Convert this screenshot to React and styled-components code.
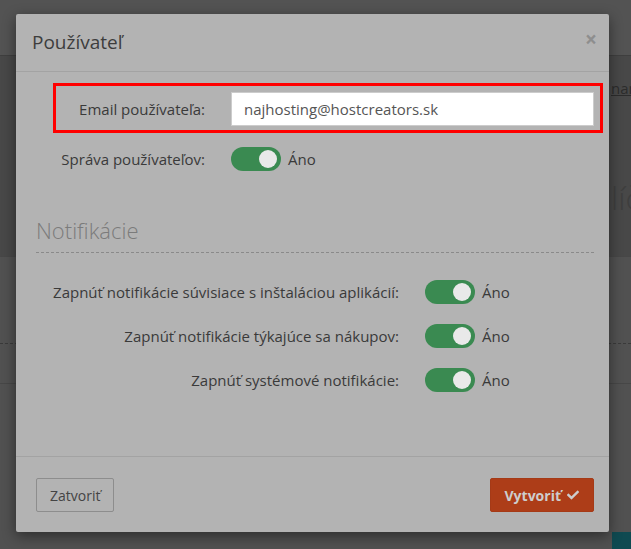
import React from "react";
import styled, { createGlobalStyle } from "styled-components";
import { FaCheck } from "react-icons/fa";

const Global = createGlobalStyle`
  html, body { margin: 0; padding: 0; }
  body {
    width: 631px; height: 549px; overflow: hidden;
    font-family: "Open Sans", "DejaVu Sans", sans-serif;
    background: #4f4f4f;
  }
  * { box-sizing: border-box; }
`;

const Page = styled.div`
  position: relative;
  width: 631px;
  height: 549px;
  overflow: hidden;
  display: flex;
  flex-direction: column;
`;

const TopBar = styled.div`
  height: 56px;
  background: #535353;
  border-bottom: 1px solid #3f3f3f;
`;

const UpperBand = styled.div`
  height: 200px;
  background: #484848;
  display: flex;
  flex-direction: column;
  padding-left: 611px;
  white-space: nowrap;
`;

const PeekLink = styled.span`
  margin-top: 22px;
  font-size: 15px;
  color: #2c2c2c;
  text-decoration: underline;
`;

const PeekTitle = styled.span`
  margin-top: 78px;
  font-size: 32px;
  color: #3e3e3e;
  font-weight: 300;
`;

const LowerBand = styled.div`
  flex: 1;
  background: #515151;
  border-top: 1px solid #474747;
  display: flex;
  flex-direction: column;
`;

const PeekDashed = styled.div`
  margin-top: 86px;
  border-top: 1px dashed #3a3a3a;
`;

const PeekRule = styled.div`
  margin-top: 39px;
  border-top: 1px solid #474747;
`;

const ChatBadge = styled.div`
  position: absolute;
  right: 0;
  bottom: 0;
  width: 19px;
  height: 17px;
  background: #0f4a51;
`;

const Modal = styled.div`
  position: absolute;
  left: 16px;
  top: 14px;
  width: 593px;
  background: #b3b3b3;
  border-radius: 2px;
  box-shadow: 0 4px 14px rgba(0, 0, 0, 0.45);
  color: #3a3a3a;
`;

const Header = styled.div`
  display: flex;
  align-items: center;
  justify-content: space-between;
  padding: 15px 12px 15px 16px;
  border-bottom: 1px solid #a3a3a3;
`;

const Title = styled.h4`
  margin: 0;
  font-size: 19px;
  line-height: 27px;
  font-weight: 400;
  color: #3d3d3d;
`;

const Close = styled.span`
  font-size: 21px;
  font-weight: 700;
  line-height: 1;
  color: #8e8e8e;
  margin-top: -6px;
`;

const Body = styled.div`
  padding: 11px 15px 59px 20px;
  display: flex;
  flex-direction: column;
`;

const Highlight = styled.div`
  margin: 0 -9px 0 17px;
  border: 3px solid #ff0000;
  padding: 6px 6px 4px 0;
`;

const Row = styled.div`
  display: grid;
  grid-template-columns: ${(p) => p.$label}px 1fr;
  column-gap: 26px;
  align-items: center;
  min-height: 34px;
  margin-top: ${(p) => p.$top || 0}px;
  margin-bottom: ${(p) => p.$gap || 0}px;
`;

const Label = styled.label`
  text-align: right;
  font-size: 15px;
  color: #3a3a3a;
  white-space: nowrap;
`;

const Input = styled.input`
  height: 34px;
  width: 100%;
  border: 1px solid #cccccc;
  background: #ffffff;
  padding: 0 12px;
  font-family: inherit;
  font-size: 15px;
  color: #555555;
  outline: none;
`;

const SwitchWrap = styled.div`
  display: flex;
  align-items: center;
  gap: 7px;
  font-size: 15px;
  color: #3a3a3a;
`;

const Track = styled.span`
  position: relative;
  width: 50px;
  height: 24px;
  border-radius: 12px;
  background: #3a8a51;
`;

const Knob = styled.span`
  position: absolute;
  right: 4px;
  top: 3px;
  width: 18px;
  height: 18px;
  border-radius: 50%;
  background: #e9e9e9;
`;

const SectionTitle = styled.h3`
  margin: 42px 0 22px;
  padding-bottom: 9px;
  font-size: 22px;
  line-height: 25px;
  font-weight: 300;
  color: #7b7b7b;
  border-bottom: 1px dashed #8a8a8a;
`;

const Footer = styled.div`
  display: flex;
  justify-content: space-between;
  align-items: center;
  padding: 21px 15px 20px 20px;
  border-top: 1px solid #a3a3a3;
`;

const Button = styled.button`
  height: 34px;
  padding: 0 ${(p) => (p.$primary ? 14 : 13)}px;
  font-family: inherit;
  font-size: 14px;
  border-radius: 2px;
  display: flex;
  align-items: center;
  gap: 6px;
  cursor: pointer;
  background: ${(p) => (p.$primary ? "#ad3d18" : "transparent")};
  border: 1px solid ${(p) => (p.$primary ? "#a53a17" : "#8d8d8d")};
  color: ${(p) => (p.$primary ? "#cdcdcd" : "#444444")};
  font-weight: ${(p) => (p.$primary ? 700 : 400)};
`;

const Toggle = () => (
  <SwitchWrap>
    <Track>
      <Knob />
    </Track>
    Áno
  </SwitchWrap>
);

export default function App() {
  const notifs = [
    "Zapnúť notifikácie súvisiace s inštaláciou aplikácií:",
    "Zapnúť notifikácie týkajúce sa nákupov:",
    "Zapnúť systémové notifikácie:",
  ];
  return (
    <>
      <Global />
      <Page>
        <TopBar />
        <UpperBand>
          <PeekLink>nan</PeekLink>
          <PeekTitle>líč</PeekTitle>
        </UpperBand>
        <LowerBand>
          <PeekDashed />
          <PeekRule />
        </LowerBand>
        <ChatBadge />
        <Modal>
          <Header>
            <Title>Používateľ</Title>
            <Close>×</Close>
          </Header>
          <Body>
            <Highlight>
              <Row $label={149}>
                <Label>Email používateľa:</Label>
                <Input defaultValue="najhosting@hostcreators.sk" />
              </Row>
            </Highlight>
            <Row $label={169} $top={9}>
              <Label>Správa používateľov:</Label>
              <Toggle />
            </Row>
            <SectionTitle>Notifikácie</SectionTitle>
            {notifs.map((n, i) => (
              <Row key={n} $label={363} $gap={i < notifs.length - 1 ? 10 : 0}>
                <Label>{n}</Label>
                <Toggle />
              </Row>
            ))}
          </Body>
          <Footer>
            <Button>Zatvoriť</Button>
            <Button $primary>
              Vytvoriť <FaCheck size={12} />
            </Button>
          </Footer>
        </Modal>
      </Page>
    </>
  );
}
